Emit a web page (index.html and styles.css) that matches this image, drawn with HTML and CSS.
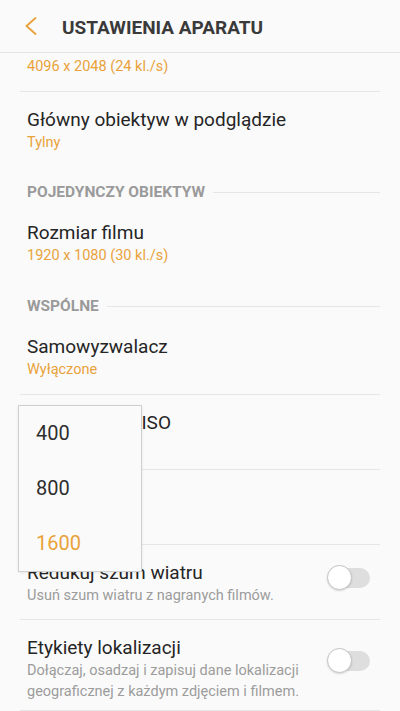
FILE: index.html
```html
<!DOCTYPE html>
<html lang="pl">
<head>
    <meta charset="UTF-8">
    <title>Ustawienia aparatu</title>
    <link rel="stylesheet" href="styles.css">
</head>
<body>
<div class="cam-page">
    <div class="cam-header">
        <svg class="cam-back" width="12" height="18" viewBox="0 0 12 18">
            <polyline points="10.5,1 1.5,9 10.5,17" fill="none" stroke="#e9a23b" stroke-width="1.8" stroke-linecap="round" stroke-linejoin="round"/>
        </svg>
        <h1 class="cam-title">USTAWIENIA APARATU</h1>
    </div>

    <div class="cam-scroll">
        <ul class="cam-list">
            <li class="cam-row">
                <div class="cam-text">
                    <div class="cam-label">Rozmiar filmu 360</div>
                    <div class="cam-value">4096 x 2048 (24 kl./s)</div>
                </div>
            </li>
            <li class="cam-row cam-row-sep">
                <div class="cam-text">
                    <div class="cam-label">Główny obiektyw w podglądzie</div>
                    <div class="cam-value">Tylny</div>
                </div>
            </li>

            <li class="cam-section">POJEDYNCZY OBIEKTYW</li>
            <li class="cam-row">
                <div class="cam-text">
                    <div class="cam-label">Rozmiar filmu</div>
                    <div class="cam-value">1920 x 1080 (30 kl./s)</div>
                </div>
            </li>

            <li class="cam-section">WSPÓLNE</li>
            <li class="cam-row">
                <div class="cam-text">
                    <div class="cam-label">Samowyzwalacz</div>
                    <div class="cam-value">Wyłączone</div>
                </div>
            </li>
            <li class="cam-row cam-row-sep">
                <div class="cam-text">
                    <div class="cam-label">Ograniczenie ISO</div>
                    <div class="cam-value">1600</div>
                </div>
            </li>
            <li class="cam-row cam-row-sep">
                <div class="cam-text">
                    <div class="cam-label">HDR</div>
                    <div class="cam-value">Wył.</div>
                </div>
            </li>
            <li class="cam-row cam-row-sep">
                <div class="cam-text">
                    <div class="cam-label">Redukuj szum wiatru</div>
                    <div class="cam-desc">Usuń szum wiatru z nagranych filmów.</div>
                </div>
                <span class="cam-switch"></span>
            </li>
            <li class="cam-row cam-row-sep cam-row-last">
                <div class="cam-text">
                    <div class="cam-label">Etykiety lokalizacji</div>
                    <div class="cam-desc">Dołączaj, osadzaj i zapisuj dane lokalizacji geograficznej z każdym zdjęciem i filmem.</div>
                </div>
                <span class="cam-switch"></span>
            </li>
        </ul>
    </div>

    <ul class="cam-menu">
        <li>400</li>
        <li>800</li>
        <li class="cam-menu-on">1600</li>
    </ul>
</div>
</body>
</html>
```

FILE: styles.css
```css
html, body {margin: 0; padding: 0; background: #fafafa;}
body {font-family: Roboto, "Noto Sans", sans-serif; color: #252525;}

.cam-page {
    position: relative;
    width: 400px;
    height: 711px;
    overflow: hidden;
}

.cam-header {
    display: flex;
    align-items: center;
    box-sizing: border-box;
    height: 53px;
    padding: 4px 0 0 25px;
    border-bottom: 1px solid #e4e4e4;
    position: relative;
    z-index: 2;
    background: #fafafa;
}
.cam-back {margin-top: -4px;}
.cam-title {
    margin: 0 0 0 25px;
    font-size: 19px;
    line-height: 24px;
    font-weight: 700;
    color: #3a3a3a;
}

.cam-scroll {overflow: hidden;}

.cam-list {
    list-style: none;
    margin: -37px 0 0;
    padding: 0;
}

.cam-row {
    display: flex;
    align-items: center;
    box-sizing: border-box;
    min-height: 75px;
    margin: 0 20px;
    padding: 0 10px 8px 7px;
}
.cam-row-sep {border-top: 1px solid #e6e6e6;}
.cam-row-last {border-bottom: 1px solid #e6e6e6;}
.cam-text {flex: 1; align-self: flex-start; padding-top: 16px;}

.cam-label {font-size: 19px; line-height: 24px; color: #252525;}
.cam-value {font-size: 14.5px; line-height: 21px; color: #e9a23b;}
.cam-desc {font-size: 14.5px; line-height: 21px; color: #9c9c9c; padding-right: 14px;}

.cam-section {
    display: flex;
    align-items: center;
    margin: 0 20px;
    padding: 16px 0 3px 7px;
    font-size: 15.5px;
    line-height: 20px;
    font-weight: 700;
    color: #9a9a9a;
}
.cam-section::after {
    content: "";
    flex: 1;
    height: 1px;
    margin-left: 8px;
    background: #e6e6e6;
}

.cam-switch {
    position: relative;
    width: 42px;
    height: 20px;
    flex: none;
    border-radius: 10px;
    background: #dedede;
}
.cam-switch::before {
    content: "";
    position: absolute;
    left: -1px;
    top: -3px;
    box-sizing: border-box;
    width: 25px;
    height: 25px;
    border-radius: 50%;
    background: #fff;
    border: 1px solid #c4c4c4;
    box-shadow: 0 1px 2px rgba(0,0,0,0.15);
}

.cam-menu {
    position: absolute;
    left: 18px;
    top: 405px;
    width: 124px;
    box-sizing: border-box;
    margin: 0;
    padding: 0;
    list-style: none;
    background: #fafafa;
    border: 1px solid #cfcfcf;
    box-shadow: 0 1px 3px rgba(0,0,0,0.08);
    z-index: 3;
}
.cam-menu li {
    height: 55px;
    line-height: 55px;
    padding-left: 17px;
    font-size: 20px;
    color: #2e2e2e;
}
.cam-menu li.cam-menu-on {color: #e9a23b;}
```
